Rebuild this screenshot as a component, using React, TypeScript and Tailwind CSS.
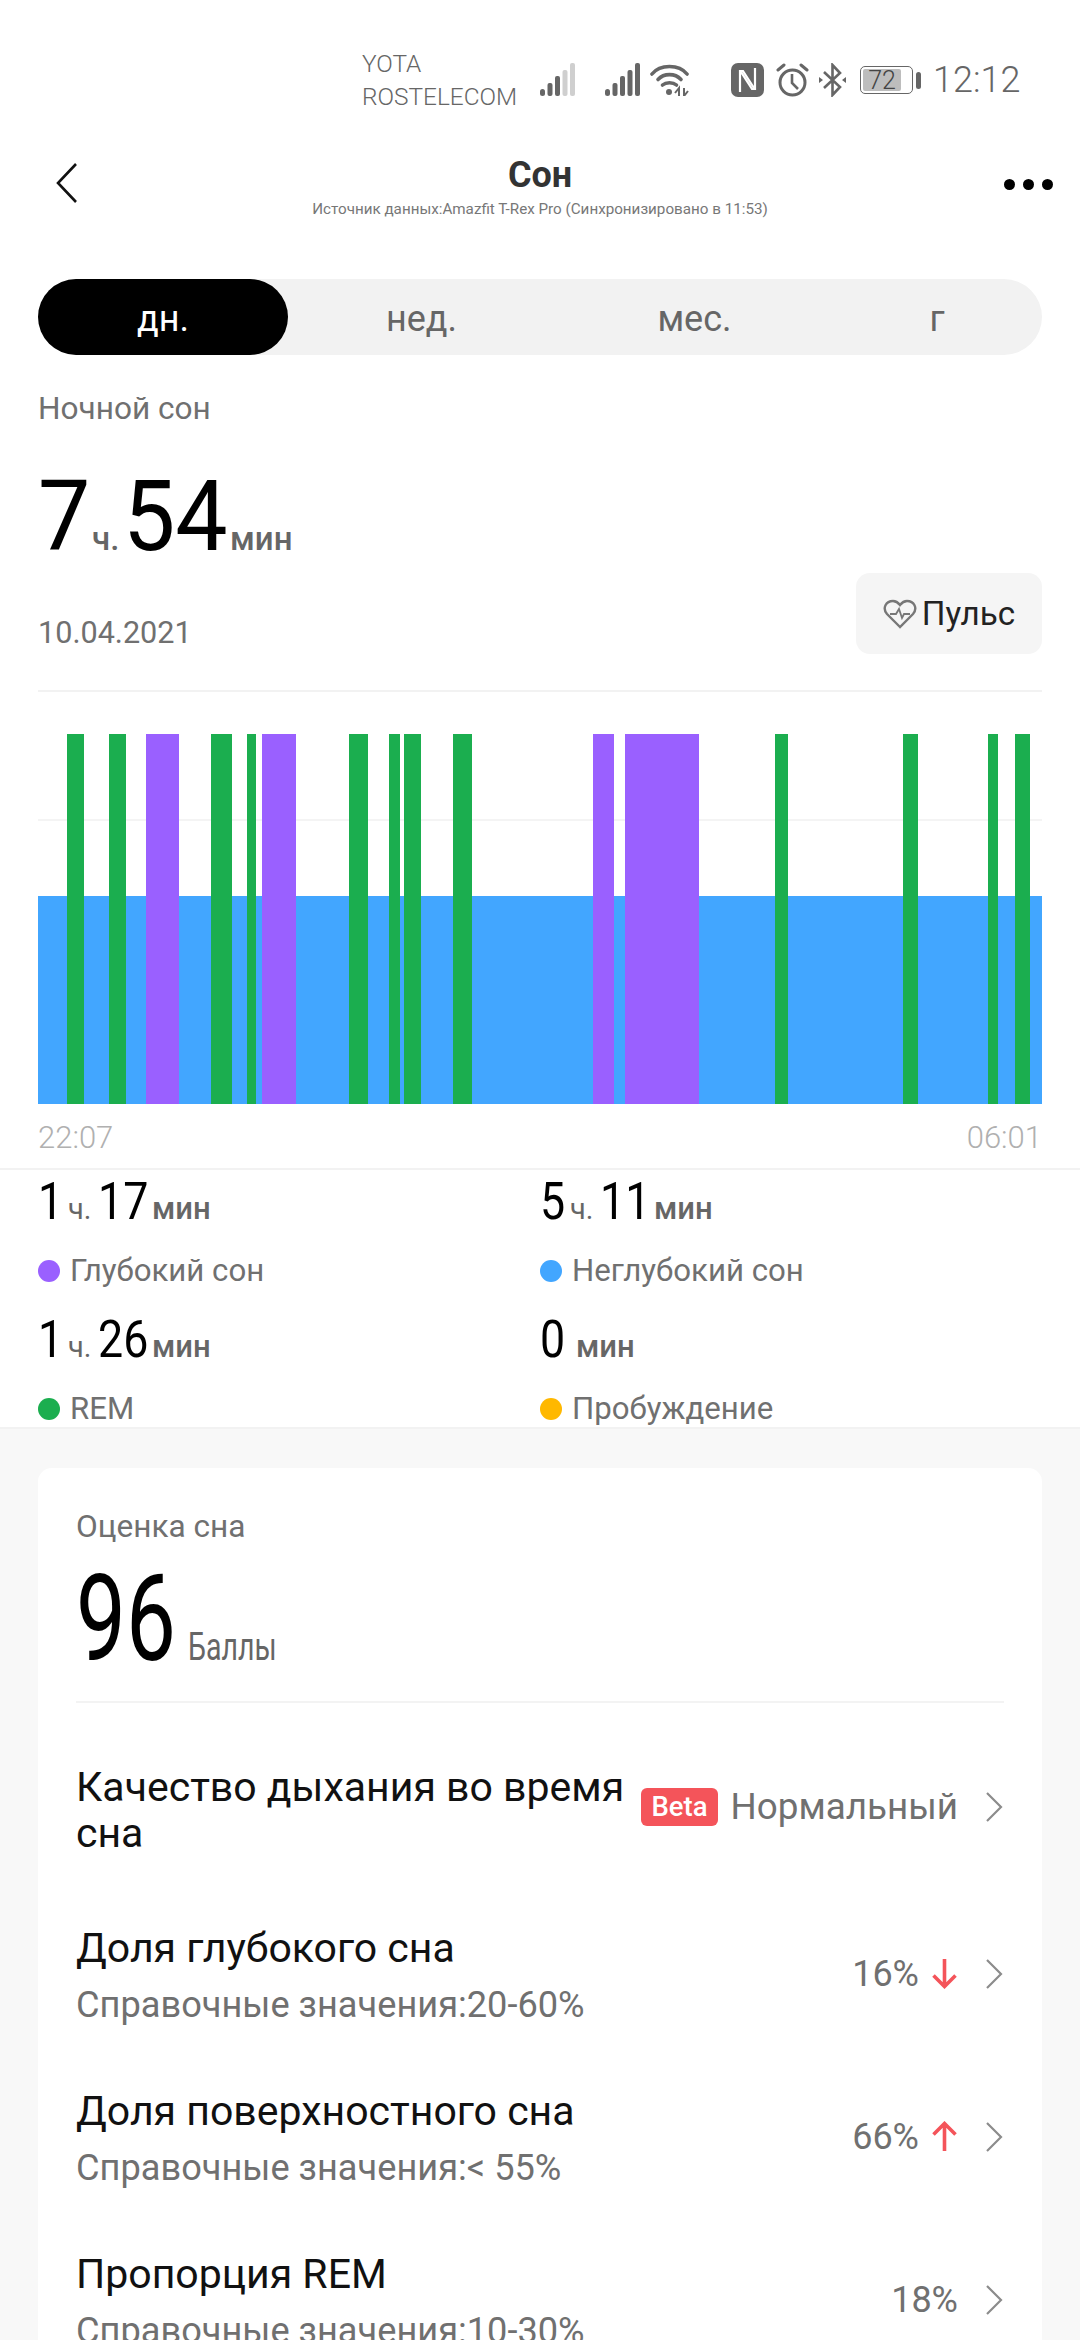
const roboto = "font-['Roboto',sans-serif]";

// x positions of the bars, measured from the left edge of the chart
const bars = [
  { left: 28, width: 17, color: "bg-[#1bae4f]" },
  { left: 70, width: 17, color: "bg-[#1bae4f]" },
  { left: 107, width: 33, color: "bg-[#9a60ff]" },
  { left: 172, width: 21, color: "bg-[#1bae4f]" },
  { left: 208, width: 9, color: "bg-[#1bae4f]" },
  { left: 223, width: 34, color: "bg-[#9a60ff]" },
  { left: 310, width: 19, color: "bg-[#1bae4f]" },
  { left: 350, width: 11, color: "bg-[#1bae4f]" },
  { left: 365, width: 17, color: "bg-[#1bae4f]" },
  { left: 414, width: 19, color: "bg-[#1bae4f]" },
  { left: 554, width: 21, color: "bg-[#9a60ff]" },
  { left: 586, width: 74, color: "bg-[#9a60ff]" },
  { left: 736, width: 13, color: "bg-[#1bae4f]" },
  { left: 864, width: 15, color: "bg-[#1bae4f]" },
  { left: 949, width: 10, color: "bg-[#1bae4f]" },
  { left: 976, width: 15, color: "bg-[#1bae4f]" },
];

function Signal({ dim }: { dim?: boolean }) {
  const far = dim ? "#cfcfcf" : "#666";
  return (
    <svg width="35" height="34" viewBox="0 0 35 34" fill="#666">
      <rect x="0" y="26" width="5" height="7" rx="2.5" />
      <rect x="7.5" y="20" width="5" height="13" rx="2" />
      <rect x="15" y="13" width="5" height="20" rx="2" />
      <rect x="22.5" y="7" width="5" height="26" rx="2" fill={far} />
      <rect x="30" y="0" width="5" height="33" rx="2" fill={far} />
    </svg>
  );
}

function Wifi() {
  return (
    <svg width="39" height="32" viewBox="0 0 39 32" fill="none" stroke="#666" strokeWidth="3.6" strokeLinecap="round">
      <path d="M2 10 C10 0 29 0 37 10" />
      <path d="M8 15.5 C14 9 25 9 31 15.5" />
      <path d="M12.5 21 C16 18 23 18 26.5 21" />
      <circle cx="19" cy="28" r="3" fill="#666" stroke="none" />
      <path d="M25 29 L29 24 V32 M34 24 V32 L38 27" strokeWidth="2" strokeLinecap="butt" />
    </svg>
  );
}

function Nfc() {
  return (
    <svg width="33" height="34" viewBox="0 0 33 34">
      <rect x="0" y="0" width="33" height="34" rx="7" fill="#666" />
      <path d="M9 29 V8 H12 L23 25 M24 5 V26 H21 L10 9" stroke="#fff" strokeWidth="2.2" fill="none" />
    </svg>
  );
}

function Alarm() {
  return (
    <svg width="33" height="34" viewBox="0 0 33 34" fill="none" stroke="#666" strokeWidth="3">
      <circle cx="16.5" cy="19.5" r="12.5" />
      <path d="M16 11 V20 L22 26" strokeWidth="2.6" />
      <path d="M2 7 L8 2 M31 7 L25 2" strokeLinecap="round" />
    </svg>
  );
}

function Bluetooth() {
  return (
    <svg width="27" height="34" viewBox="0 0 27 34" fill="none" stroke="#666" strokeWidth="2.6">
      <path d="M5 9 L21 24 L13.5 32 V2 L21 10 L5 25" />
      <path d="M0 14 L4 17 L0 20 Z M27 14 L23 17 L27 20 Z" fill="#666" stroke="none" />
    </svg>
  );
}

function Battery() {
  return (
    <div className="flex items-center gap-[3px]">
      <div className="h-[28px] w-[53px] rounded-[5px] border-[1.5px] border-[#666] p-[2px]">
        <div className={`flex h-full w-[38px] items-center justify-center rounded-[2px] bg-[#bdbdbd] text-[25px] leading-none font-light text-[#444] ${roboto}`}>
          72
        </div>
      </div>
      <div className="h-[17px] w-[5px] rounded-sm bg-[#666]" />
    </div>
  );
}

function StatusBar() {
  return (
    <div className="flex h-[142px] items-start pl-[362px] pt-[47px]">
      <div className={`w-[178px] text-[24.4px] leading-[33px] font-light text-[#666] ${roboto}`}>
        <div>YOTA</div>
        <div>ROSTELECOM</div>
      </div>
      <div className="mt-[15px] flex items-center">
        <Signal dim />
        <div className="w-[30px]" />
        <Signal />
        <div className="w-[10px]" />
        <Wifi />
        <div className="w-[42px]" />
        <Nfc />
        <div className="w-[12px]" />
        <Alarm />
        <div className="w-[10px]" />
        <Bluetooth />
        <div className="w-[14px]" />
        <Battery />
        <span className={`ml-[12px] text-[36px] leading-none font-light text-[#666] ${roboto}`}>12:12</span>
      </div>
    </div>
  );
}

function Header() {
  return (
    <div className="relative flex h-[137px] flex-col items-center">
      <svg className="absolute left-[55px] top-[20px]" width="24" height="42" viewBox="0 0 24 42" fill="none" stroke="#111" strokeWidth="2.6">
        <path d="M21 2 L3 21 L21 40" />
      </svg>
      <div className={`mt-[13px] text-[36px] leading-[40px] font-bold text-[#333] ${roboto}`}>Сон</div>
      <div className={`mt-[4px] text-[15.2px] leading-[20px] text-[#777] ${roboto}`}>
        Источник данных:Amazfit T-Rex Pro (Синхронизировано в 11:53)
      </div>
      <div className="absolute right-[27px] top-[37px] flex gap-[8px]">
        <div className="size-[11px] rounded-full bg-black" />
        <div className="size-[11px] rounded-full bg-black" />
        <div className="size-[11px] rounded-full bg-black" />
      </div>
    </div>
  );
}

function Tabs() {
  return (
    <div className={`mx-[38px] flex h-[76px] items-center rounded-full bg-[#f2f2f2] text-[36px] text-[#666] ${roboto}`}>
      <div className="flex h-full w-[250px] items-center justify-center rounded-full bg-black pt-[3px] text-white">дн.</div>
      <div className="w-[272px] pt-[3px] pr-[5px] text-center">нед.</div>
      <div className="w-[272px] pt-[3px] pr-[3px] text-center">мес.</div>
      <div className="flex-1 pt-[3px] text-center">г</div>
    </div>
  );
}

// big digits in the screenshot are a condensed cut, so squeeze Roboto
function BigNum({ value, className }: { value: string; className: string }) {
  return <span className={`inline-block origin-left font-normal text-black ${className}`}>{value}</span>;
}

function Summary() {
  return (
    <div className="relative mx-[38px]">
      <div className={`pt-[36px] text-[31.6px] leading-[36px] text-[#707070] ${roboto}`}>Ночной сон</div>
      <div className={`mt-[35px] flex h-[110px] items-baseline whitespace-nowrap ${roboto}`}>
        <BigNum value="7" className="w-[54px] scale-x-[0.95] text-[98px] leading-[110px]" />
        <span className="w-[31px] text-[33px] font-medium text-[#666]">ч.</span>
        <BigNum value="54" className="w-[107px] scale-x-[0.95] text-[98px] leading-[110px]" />
        <span className="text-[33px] font-medium text-[#666]">мин</span>
      </div>
      <div className={`mt-[42px] text-[30.6px] leading-[38px] text-[#707070] ${roboto}`}>10.04.2021</div>
      <div className="absolute right-0 top-[218px] flex h-[81px] w-[186px] items-center justify-center gap-[5px] rounded-[14px] bg-[#f5f5f5]">
        <svg width="34" height="30" viewBox="0 0 34 30" fill="none" stroke="#777" strokeWidth="2.4">
          <path d="M17 28 L4 15 C-1 9 3 2 10 2 C13 2 15 3.5 17 6 C19 3.5 21 2 24 2 C31 2 35 9 30 15 Z" />
          <path d="M7 15 H13 L16 10 L19 19 L21 15 H27" strokeWidth="1.8" />
        </svg>
        <span className={`text-[33.2px] text-[#222] ${roboto}`}>Пульс</span>
      </div>
    </div>
  );
}

function Chart() {
  return (
    <div className="mx-[38px]">
      <div className="h-[2px] bg-[#f2f2f2]" />
      <div className="relative mt-[42px] h-[370px]">
        <div className="absolute inset-x-0 top-[85px] h-[2px] bg-[#f4f4f4]" />
        <div className="absolute inset-x-0 bottom-0 top-[162px] bg-[#42a6ff]" />
        {bars.map((b) => (
          <div key={b.left} className={`absolute inset-y-0 ${b.color}`} style={{ left: b.left + 1, width: b.width }} />
        ))}
      </div>
      <div className={`mt-[18px] flex justify-between text-[31px] leading-[32px] font-light text-[#b0b0b0] ${roboto}`}>
        <span>22:07</span>
        <span>06:01</span>
      </div>
    </div>
  );
}

function Stat({ h, m, label, dot }: { h?: string; m: string; label: string; dot: string }) {
  return (
    <div className={`whitespace-nowrap ${roboto}`}>
      <div className="flex h-[58px] items-baseline">
        {h && (
          <>
            <BigNum value={h} className="w-[30px] scale-x-[0.86] text-[52px] leading-[58px]" />
            <span className="w-[30px] text-[29px] text-[#666]">ч.</span>
          </>
        )}
        <BigNum value={m} className={`scale-x-[0.86] text-[52px] leading-[58px] ${h ? "w-[54px]" : "w-[36px]"}`} />
        <span className="text-[31px] font-medium text-[#666]">мин</span>
      </div>
      <div className="mt-[21px] flex h-[38px] items-center gap-[10px]">
        <div className={`size-[22px] rounded-full ${dot}`} />
        <span className="text-[31.2px] text-[#707070]">{label}</span>
      </div>
    </div>
  );
}

function Stats() {
  return (
    <div className="h-[261px] border-y-2 border-[#f2f2f2] pl-[38px]">
      <div className="grid grid-cols-[502px_1fr] gap-y-[21px] pt-[3px]">
        <Stat h="1" m="17" label="Глубокий сон" dot="bg-[#9a60ff]" />
        <Stat h="5" m="11" label="Неглубокий сон" dot="bg-[#42a6ff]" />
        <Stat h="1" m="26" label="REM" dot="bg-[#1bae4f]" />
        <Stat m="0" label="Пробуждение" dot="bg-[#ffb800]" />
      </div>
    </div>
  );
}

function Arrow({ up }: { up?: boolean }) {
  return (
    <svg width="27" height="31" viewBox="0 0 27 31" fill="none" stroke="#f4545a" strokeWidth="3.6" className={up ? "rotate-180" : ""}>
      <path d="M13.5 1 V28 M2.5 17.5 L13.5 28.5 L24.5 17.5" />
    </svg>
  );
}

function Chevron() {
  return (
    <svg className="ml-[27px] mr-[1px]" width="18" height="32" viewBox="0 0 18 32" fill="none" stroke="#8c8c8c" strokeWidth="2.2">
      <path d="M2 2 L16 16 L2 30" />
    </svg>
  );
}

function Row({ title, sub, right }: { title: string; sub: string; right: React.ReactNode }) {
  return (
    <div className="flex h-[163px] items-center justify-between">
      <div>
        <div className="text-[41px] leading-[46px] text-[#111]">{title}</div>
        <div className="mt-[11px] text-[36.2px] leading-[46px] text-[#707070]">{sub}</div>
      </div>
      <div className="mb-[6px] flex items-center text-[36px] text-[#707070]">
        {right}
        <Chevron />
      </div>
    </div>
  );
}

function ScoreCard() {
  return (
    <div className={`mx-[38px] mt-[39px] rounded-[14px] bg-white px-[38px] pt-[41px] ${roboto}`}>
      <div className="text-[31.6px] leading-[36px] text-[#707070]">Оценка сна</div>
      <div className="mt-[15px] flex h-[118px] items-baseline whitespace-nowrap">
        <BigNum value="96" className="w-[112px] scale-x-[0.74] text-[120px] leading-[118px]" />
        <span className="inline-block origin-left scale-x-[0.75] text-[38px] text-[#666]">Баллы</span>
      </div>
      <div className="mt-[23px] h-[2px] bg-[#f3f3f3]" />
      <div className="flex h-[192px] items-center justify-between pt-[22px]">
        <div className="w-[560px] text-[41px] leading-[46px] text-[#111]">Качество дыхания во время сна</div>
        <div className="mb-[6px] flex items-center text-[36.8px] text-[#707070]">
          <span className="rounded-[6px] bg-[#f4545a] px-[10px] py-[3px] text-[27.5px] leading-[32px] font-medium text-white">Beta</span>
          <span className="ml-[13px]">Нормальный</span>
          <Chevron />
        </div>
      </div>
      <Row
        title="Доля глубокого сна"
        sub="Справочные значения:20-60%"
        right={
          <>
            <span>16%</span>
            <span className="ml-[12px]"><Arrow /></span>
          </>
        }
      />
      <Row
        title="Доля поверхностного сна"
        sub="Справочные значения:< 55%"
        right={
          <>
            <span>66%</span>
            <span className="ml-[12px]"><Arrow up /></span>
          </>
        }
      />
      <Row title="Пропорция REM" sub="Справочные значения:10-30%" right={<span>18%</span>} />
    </div>
  );
}

export default function App() {
  return (
    <div className="h-[2340px] w-[1080px] overflow-hidden bg-[#f8f8f8]">
      <div className="bg-white">
        <StatusBar />
        <Header />
        <Tabs />
        <Summary />
        <div className="h-[38px]" />
        <Chart />
        <div className="h-[14px]" />
        <Stats />
      </div>
      <ScoreCard />
    </div>
  );
}
